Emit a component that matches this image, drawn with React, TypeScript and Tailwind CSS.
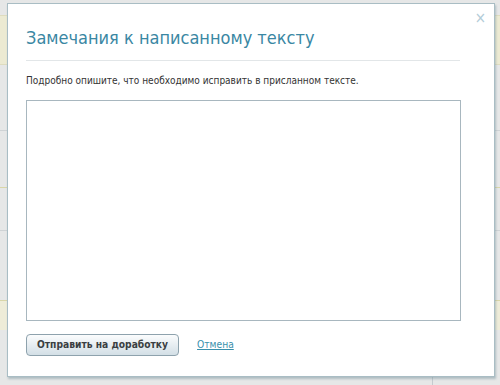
// Modal "Замечания к написанному тексту" over a dimmed page
export default function App() {
  return (
    <div className="relative w-[500px] h-[385px] overflow-hidden bg-[#e6e7e7] font-['DejaVu_Sans_Condensed','DejaVu_Sans',Tahoma,sans-serif] font-stretch-condensed">
      {/* ── Page behind the modal ───────────────────────── */}
      <div className="flex flex-col pt-[15px]">
        <div className="h-[50px] bg-[#ecead2] border-y border-[#dedcbf]" />
        <div className="h-[65px]" />
        <div className="h-[57px] border-t border-[#cfd3d5]" />
        <div className="h-[43px] border-t border-[#d9d6a8]" />
        <div className="h-[70px] border-t border-[#cfd3d5]" />
        <div className="h-[30px] border-t border-[#d9d6a8] bg-[#eeecd8]" />
      </div>
      <div className="absolute left-[432px] top-[370px] w-px h-[20px] bg-[#c5cbcf]" />

      {/* ── Modal ───────────────────────────────────────── */}
      <div className="absolute left-[7px] top-[3px] w-[488px] h-[374px] bg-white border border-[#a9bdc4] shadow-[1px_2px_2px_rgba(110,140,150,0.45)] px-[18px] pt-[21px]">
        <button className="absolute right-[8px] top-[7px] text-[#b3ccd8] text-[15px] leading-none">×</button>

        <h2 className="text-[18px] leading-[26px] text-[#3a87a3] pb-[9px] border-b border-[#e2e6e8] mr-[16px]">
          Замечания к написанному тексту
        </h2>

        <p className="mt-[13px] text-[10px] leading-[14px] text-[#333]">
          Подробно опишите, что необходимо исправить в присланном тексте.
        </p>

        <textarea className="mt-[12px] block w-[435px] h-[221px] border border-[#a8b7bf] resize-none outline-none" />

        <div className="mt-[13px] flex items-center gap-[18px]">
          <button className="h-[22px] px-[10px] rounded-[4px] border border-[#8ea2ad] bg-gradient-to-b from-[#fbfcfd] to-[#d3dfe6] text-[10.2px] font-bold text-[#3b3f42]">
            Отправить на доработку
          </button>
          <a href="#" className="text-[10.2px] text-[#3a90ac] underline">
            Отмена
          </a>
        </div>
      </div>
    </div>
  );
}
